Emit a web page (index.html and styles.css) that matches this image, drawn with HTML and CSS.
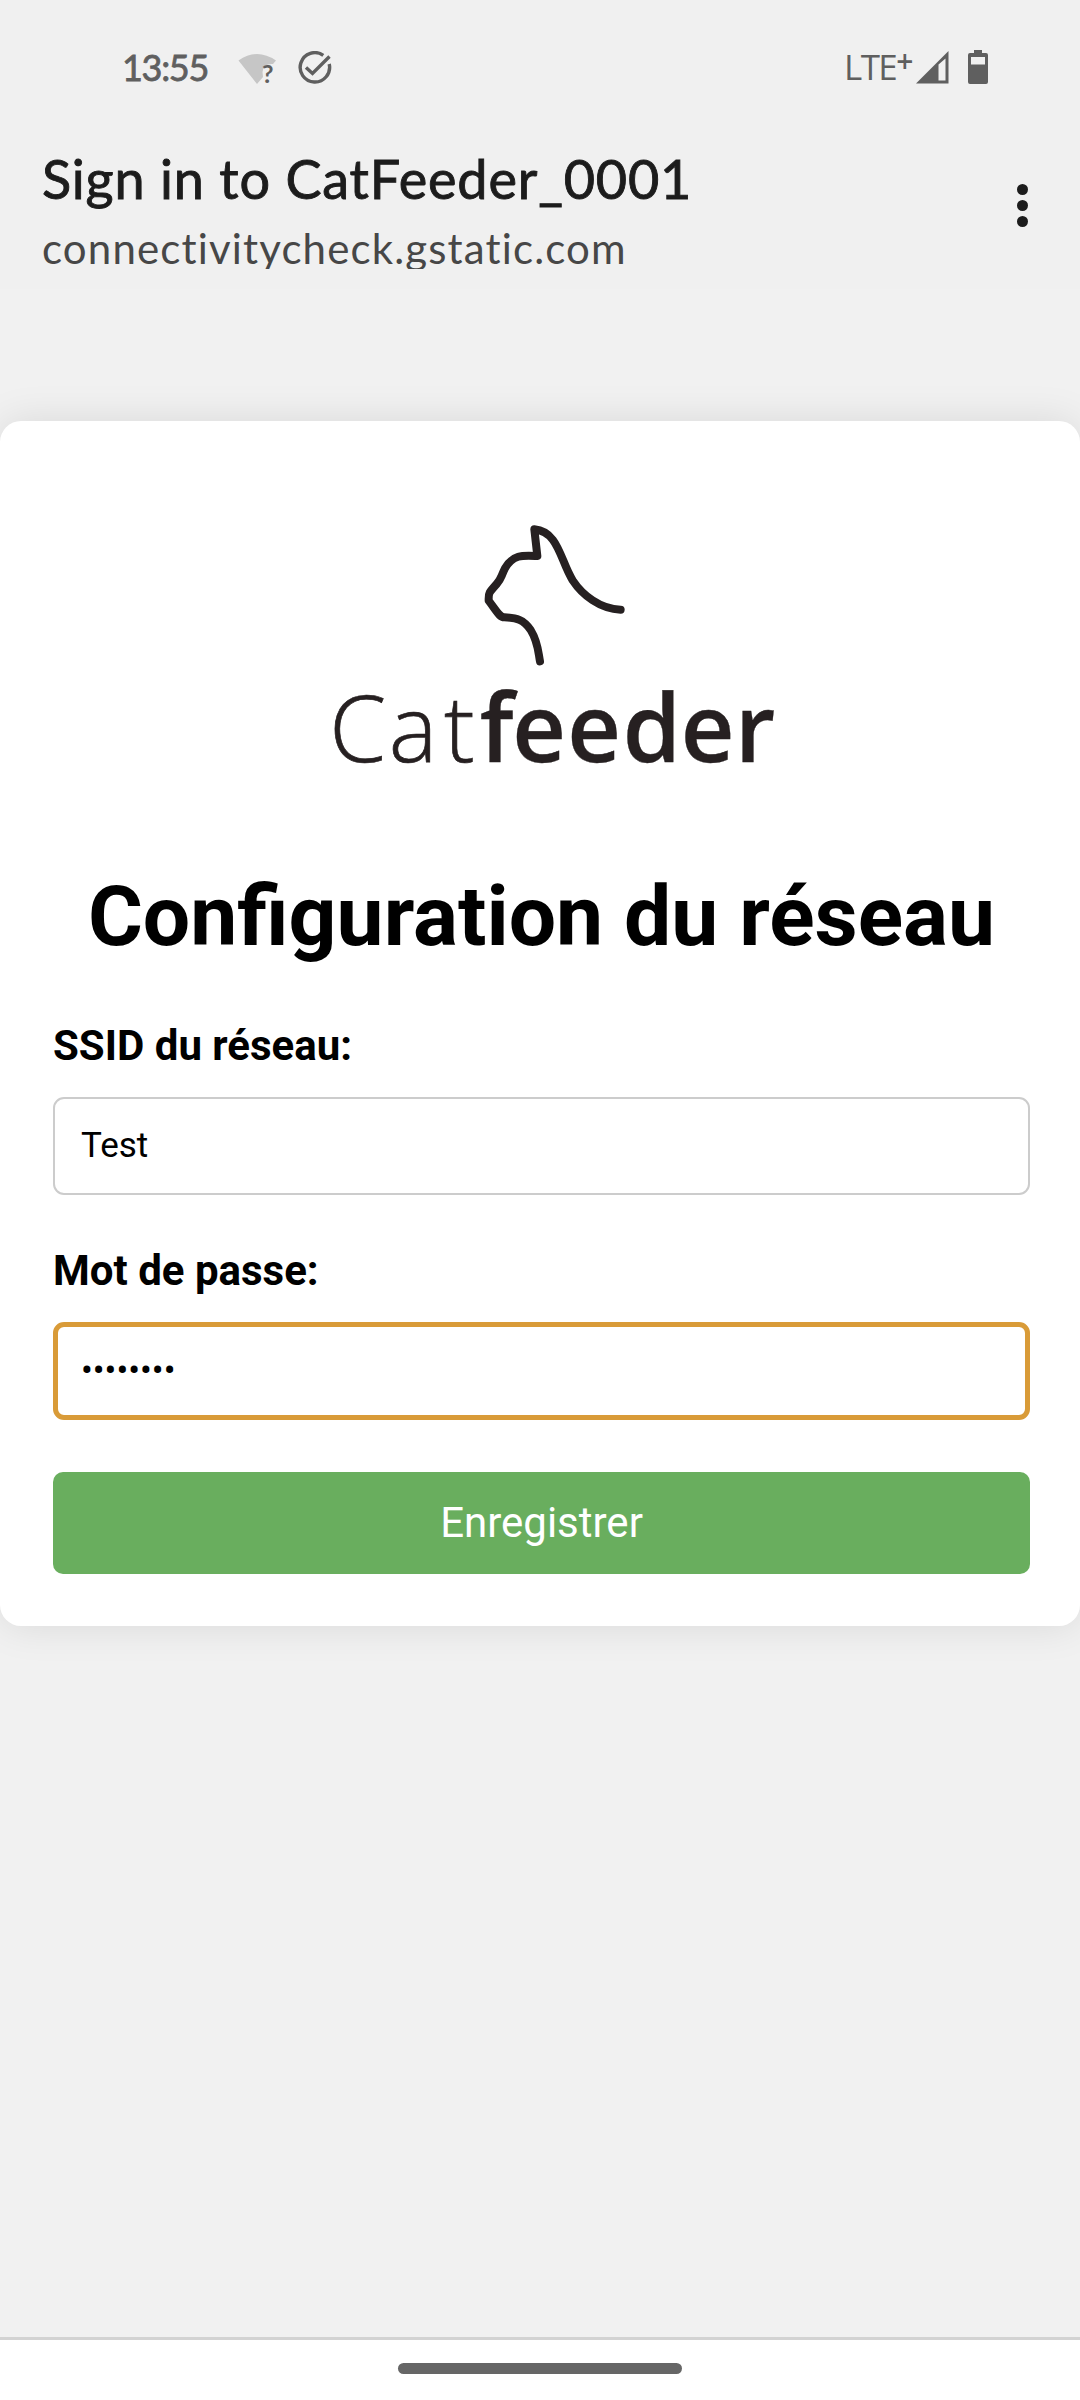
FILE: index.html
```html
<!DOCTYPE html>
<html lang="fr">
<head>
<meta charset="utf-8">
<title>Configuration du réseau</title>
<link rel="stylesheet" href="styles.css">
</head>
<body>
<div class="statusbar">
  <span class="clock">13:55</span>
  <svg class="wifi" width="40" height="34" viewBox="0 0 40 34">
    <path d="M0.5 8.500Q19 -4.500 38 8.500L35 12Q26 11 24.500 20L25 25L19 32Z" fill="#c6c6c6"/>
    <text x="24" y="31" class="wifi-mark">?</text>
  </svg>
  <svg class="check" width="34" height="34" viewBox="0 0 34 34" fill="none" stroke="#5f5f5f" stroke-width="3.400">
    <path d="M25.300 4.300A14.700 14.700 0 1 0 31.200 13"/>
    <path d="M8 16.500L14.500 22.500L31.500 5.500"/>
  </svg>
  <span class="lte">LTE<span class="plus">+</span></span>
  <svg class="signal" width="34" height="34" viewBox="0 0 34 34">
    <path fill="#5f5f5f" fill-rule="evenodd" d="M0 32.500L32.500 0V32.500ZM22.500 13.500V29.500H29.500V7.500Z"/>
  </svg>
  <svg class="battery" width="20" height="34" viewBox="0 0 20 34">
    <path fill="#5f5f5f" fill-rule="evenodd" d="M6 0H14V3H18Q20 3 20 5V32Q20 34 18 34H2Q0 34 0 32V5Q0 3 2 3H6ZM3 7V14.500H17V7Z"/>
  </svg>
</div>
<header class="header">
  <div class="titles">
    <div class="title">Sign in to CatFeeder_0001</div>
    <div class="host">connectivitycheck.gstatic.com</div>
  </div>
  <div class="more"><i></i><i></i><i></i></div>
</header>
<main class="page">
  <form class="card">
    <svg class="logo" viewBox="0 0 1470 870" width="490" height="290">
      <path fill="none" stroke="#262021" stroke-width="24" stroke-linecap="round" stroke-linejoin="round" d="M932 329C870 327 817 285 788 241C750 180 746 95 673 88L682 168C640 166 610 162 585 205C571 234 574 236 560 252C534 281 536 279 536 302C563 338 569 352 583 352C620 354 640 358 662 390C685 427 685 460 690 484"/>
      <text class="thin" y="785" x="58 236 402">Cat</text>
      <text class="thick" y="785" x="509 607 772 938 1112 1275">feeder</text>
    </svg>
    <h1 class="heading">Configuration du réseau</h1>
    <label class="label first" for="ssid">SSID du réseau:</label>
    <input class="field" id="ssid" type="text" value="Test">
    <label class="label" for="pass">Mot de passe:</label>
    <input class="field active" id="pass" type="password" value="testtest">
    <button class="save" type="button">Enregistrer</button>
  </form>
</main>
<footer class="navbar"><div class="pill"></div></footer>
</body>
</html>
```
FILE: styles.css
```css
* { box-sizing: border-box; }
body {
  margin: 0;
  width: 1080px;
  height: 2400px;
  display: flex;
  flex-direction: column;
  overflow: hidden;
  background: #f1f1f1;
  font-family: Roboto, sans-serif;
}
.statusbar {
  height: 130px;
  flex: none;
  display: flex;
  align-items: flex-start;
  padding: 50px 92px 0 122px;
  background: #f0f0f0;
  color: #5f5f5f;
}
.clock {
  width: 116px;
  font: 400 36px/34px Lato, sans-serif;
  letter-spacing: -1.3px;
  -webkit-text-stroke: .8px #5f5f5f;
}
.wifi { margin-top: 2px; overflow: visible; }
.wifi-mark { font: 700 25px Lato, sans-serif; fill: #5f5f5f; }
.check { margin: 1px 0 0 20px; }
.lte {
  margin-left: auto;
  font: 400 35px/34px "Open Sans", sans-serif;
  letter-spacing: -1.6px;
  width: 72px;
  display: flex;
}
.plus { font-size: 30px; line-height: 22px; font-weight: 600; }
.signal { margin: 1px 18px 0 0; }
.header {
  height: 159px;
  flex: none;
  display: flex;
  justify-content: space-between;
  padding: 18px 52px 0 42px;
  background: #f0f0f0;
}
.title {
  font: 400 54px/62px Lato, sans-serif;
  letter-spacing: .8px;
  -webkit-text-stroke: .9px #1c1c1c;
  color: #1c1c1c;
  white-space: nowrap;
}
.host {
  margin-top: 11px;
  height: 48px;
  overflow: hidden;
  font: 400 42px/54px Lato, sans-serif;
  font-variant-ligatures: none;
  letter-spacing: 1.15px;
  color: #474747;
}
.more {
  display: flex;
  flex-direction: column;
  gap: 5px;
  padding-top: 36px;
}
.more i { width: 11px; height: 11px; border-radius: 50%; background: #1c1c1c; }
.page { flex: 1; padding-top: 132px; }
.card {
  height: 1205px;
  padding: 79px 50px 0 53px;
  display: flex;
  flex-direction: column;
  background: #fff;
  border-radius: 21px;
  box-shadow: 0 0 40px rgba(0, 0, 0, .1);
}
.logo { margin-left: 257px; flex: none; }
.thin, .thick { fill: #262021; stroke: #262021; }
.thin { font: 300 275px "Open Sans", sans-serif; stroke-width: 2; }
.thick { font: 600 280px "Open Sans", sans-serif; stroke-width: 1; }
.heading {
  margin: 78px 0 0;
  font-size: 84px;
  line-height: 98px;
  text-align: center;
  white-space: nowrap;
}
.label {
  margin-top: 51px;
  font-size: 42px;
  line-height: 50px;
  font-weight: 700;
}
.first { margin-top: 55px; }
.field {
  height: 98px;
  margin-top: 26px;
  padding: 0 26px 2px;
  border: 2px solid #ccc;
  border-radius: 11px;
  font: 400 35px Roboto, sans-serif;
  color: #000;
  background: #fff;
  outline: none;
}
.active { border: 5px solid #d99b38; padding: 0 23px 1px; }
.save {
  height: 102px;
  margin-top: 52px;
  border: 0;
  border-radius: 10px;
  padding-bottom: 2px;
  background: #69ae5e;
  color: #fff;
  font: 400 42px Roboto, sans-serif;
}
.navbar {
  height: 63px;
  border-top: 3px solid #d3d3d3;
  background: #fff;
  padding-top: 23px;
}
.pill { width: 284px; height: 11px; margin: 0 auto; border-radius: 6px; background: #666; }
```
